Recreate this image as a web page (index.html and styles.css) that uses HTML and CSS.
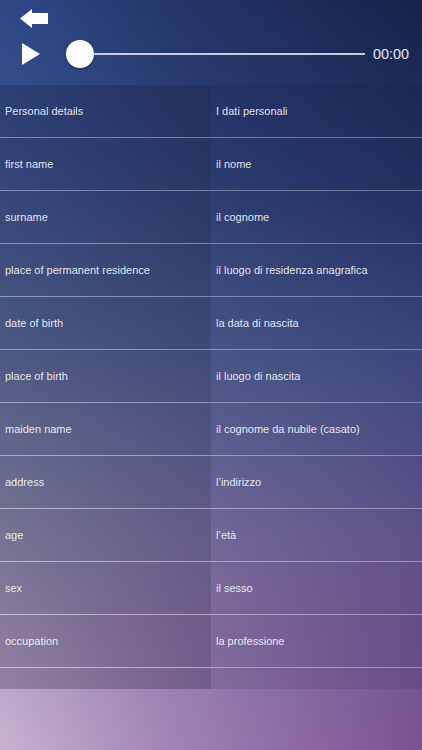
FILE: index.html
```html
<!DOCTYPE html>
<html>
<head>
<meta charset="utf-8">
<link rel="stylesheet" href="styles.css">
</head>
<body>
<div class="app">
  <div class="bg-right"></div>
  <div class="header">
    <div class="back-row">
      <svg class="back" width="28" height="20" viewBox="0 0 28 20"><path d="M0 9.5 L12 0 L12 4 L28 4 L28 15 L12 15 L12 19 Z" fill="#fff"/></svg>
    </div>
    <div class="player">
      <svg class="play" width="18" height="22" viewBox="0 0 18 22"><path d="M0 0 L18 11 L0 22 Z" fill="#fff"/></svg>
      <div class="knob"></div>
      <div class="track"></div>
      <div class="time">00:00</div>
    </div>
  </div>
  <div class="table">
    <div class="row"><div class="cell l">Personal details</div><div class="cell r">I dati personali</div></div>
    <div class="row"><div class="cell l">first name</div><div class="cell r">il nome</div></div>
    <div class="row"><div class="cell l">surname</div><div class="cell r">il cognome</div></div>
    <div class="row"><div class="cell l">place of permanent residence</div><div class="cell r">il luogo di residenza anagrafica</div></div>
    <div class="row"><div class="cell l">date of birth</div><div class="cell r">la data di nascita</div></div>
    <div class="row"><div class="cell l">place of birth</div><div class="cell r">il luogo di nascita</div></div>
    <div class="row"><div class="cell l">maiden name</div><div class="cell r">il cognome da nubile (casato)</div></div>
    <div class="row"><div class="cell l">address</div><div class="cell r">l’indirizzo</div></div>
    <div class="row"><div class="cell l">age</div><div class="cell r">l’età</div></div>
    <div class="row"><div class="cell l">sex</div><div class="cell r">il sesso</div></div>
    <div class="row"><div class="cell l">occupation</div><div class="cell r">la professione</div></div>
    <div class="row partial"><div class="cell l"></div><div class="cell r"></div></div>
  </div>
  <div class="footer"></div>
</div>
</body>
</html>
```
FILE: styles.css
```css
html, body {
  margin: 0;
  padding: 0;
}
body {
  width: 422px;
  height: 750px;
  overflow: hidden;
  font-family: "Liberation Sans", Arial, sans-serif;
}
.app {
  position: relative;
  width: 422px;
  height: 750px;
  display: flex;
  flex-direction: column;
  background: linear-gradient(to bottom, #304b8b 0%, #3b5694 20%, #5d72a2 45%, #9796b6 68%, #baa7c9 85%, #cdb7d6 100%);
}
.bg-right {
  position: absolute;
  inset: 0;
  background: linear-gradient(to bottom, #17214a 0%, #243266 25%, #46508a 50%, #6a5a96 72%, #7a5092 100%);
  -webkit-mask-image: linear-gradient(to right, rgba(0,0,0,0.05) 0%, rgba(0,0,0,0.55) 45%, #000 100%);
  mask-image: linear-gradient(to right, rgba(0,0,0,0.05) 0%, rgba(0,0,0,0.55) 45%, #000 100%);
}
.header, .table, .footer {
  position: relative;
}
.header {
  height: 85px;
  box-sizing: border-box;
  padding-top: 9px;
}
.back-row {
  height: 20px;
  padding-left: 20px;
}
.back {
  display: block;
}
.player {
  margin-top: 11px;
  height: 28px;
  display: flex;
  align-items: center;
  padding-left: 22px;
}
.play {
  display: block;
  margin-top: -1px;
}
.knob {
  width: 28px;
  height: 28px;
  border-radius: 50%;
  background: #fff;
  margin-left: 26px;
  box-shadow: 0 1px 3px rgba(0,0,0,0.35);
}
.track {
  width: 271px;
  height: 2px;
  background: #c9cdd9;
}
.time {
  margin-left: 8px;
  color: #e4e8f2;
  font-size: 14.4px;
}
.table {
  display: flex;
  flex-direction: column;
}
.row {
  display: grid;
  grid-template-columns: 211px 211px;
  height: 53px;
  box-sizing: border-box;
  border-bottom: 1px solid rgba(255,255,255,0.32);
}
.row.partial {
  height: 21px;
  border-bottom: none;
}
.cell {
  display: flex;
  align-items: center;
  padding-left: 5px;
  color: rgba(255,255,255,0.88);
  font-size: 11px;
}
.cell.l {
  background: rgba(25,25,55,0.28);
}
.cell.r {
  background: rgba(25,25,55,0.13);
}
.footer {
  flex: 1;
}
```
